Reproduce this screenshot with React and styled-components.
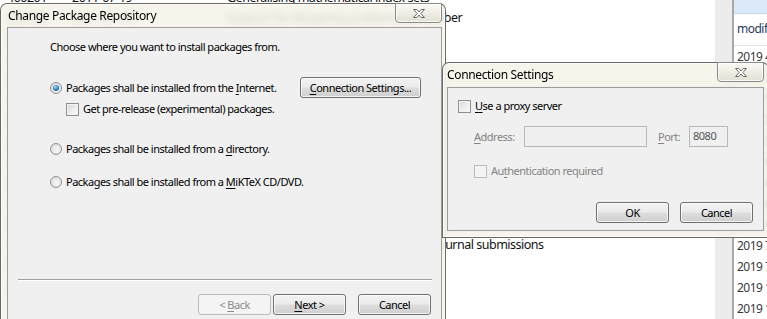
import React from 'react';
import styled, { createGlobalStyle } from 'styled-components';

const GlobalStyle = createGlobalStyle`
  html, body {
    margin: 0;
    padding: 0;
    background: #fff;
  }
  body {
    font-family: 'Noto Sans', 'Segoe UI', sans-serif;
    font-size: 11px;
    letter-spacing: -0.5px;
    color: #000;
  }
  * {
    box-sizing: border-box;
  }
`;

const Desktop = styled.div`
  position: relative;
  width: 767px;
  height: 319px;
  overflow: hidden;
  background: #fff;
`;

/* ---------- application behind the dialogs ---------- */

const AppBehind = styled.div`
  display: flex;
  height: 100%;
`;

const ListPane = styled.div`
  width: 715px;
  flex: none;
  margin-top: -13px;
`;

const ListRow = styled.div`
  display: grid;
  grid-template-columns: 65px 155px 1fr;
  align-items: center;
  height: 20.6px;
  padding-left: 7px;
  white-space: nowrap;
  font-size: 12.5px;
  color: #111;
`;

const Cell = styled.span`
  overflow: hidden;
`;

const Splitter = styled.div`
  width: 19px;
  flex: none;
  background: #ececec;
  border-right: 2px solid #a9a9a9;
`;

const DateColumn = styled.div`
  width: 56px;
  flex: none;
  display: flex;
  flex-direction: column;
`;

const DateTopStrip = styled.div`
  height: 14px;
  background: #dce9f8;
  border-bottom: 1px solid #c3d6ec;
`;

const DateHeader = styled.div`
  height: 33px;
  display: flex;
  flex-direction: column;
  padding-top: 2px;
  border-bottom: 1px solid #e3e3e3;
`;

const SortArrow = styled.svg`
  align-self: flex-end;
  margin-right: 6px;
`;

const HeaderLabel = styled.span`
  padding-left: 3px;
  line-height: 16px;
  margin-top: 1px;
  font-size: 12px;
  color: #1e395b;
  white-space: nowrap;
`;

const DateRow = styled.div`
  height: 21px;
  line-height: 21px;
  padding-left: 3px;
  white-space: nowrap;
  font-size: 12px;
  color: #3a3a3a;
`;

/* ---------- dialog windows ---------- */

const Window = styled.div`
  position: absolute;
  left: ${(p) => p.$x}px;
  top: ${(p) => p.$y}px;
  width: ${(p) => p.$w}px;
  height: ${(p) => p.$h}px;
  display: flex;
  flex-direction: column;
  padding: 0 ${(p) => p.$padR}px ${(p) => p.$padB}px ${(p) => p.$padL}px;
  border: 1px solid rgba(70, 70, 70, 0.8);
  border-radius: 7px 7px 0 0;
  background: rgba(245, 242, 232, 0.86);
  backdrop-filter: blur(3px);
  box-shadow: inset 0 0 0 1px rgba(255, 255, 255, 0.7);
`;

const TitleBar = styled.div`
  height: ${(p) => p.$h}px;
  flex: none;
  display: flex;
  align-items: flex-start;
  justify-content: space-between;
`;

const Title = styled.span`
  line-height: ${(p) => p.$h}px;
  padding-left: ${(p) => p.$indent || 0}px;
  font-size: 12px;
  letter-spacing: -0.35px;
  color: #000;
`;

const CloseButton = styled.div`
  width: 47px;
  height: 20px;
  margin-top: -1px;
  display: flex;
  align-items: center;
  justify-content: center;
  border: 1px solid #8a8a8a;
  border-radius: 0 0 4px 4px;
  background: linear-gradient(180deg, #fbfaf6 0%, #efece3 50%, #e2dfd5 100%);
  box-shadow: inset 0 0 0 1px rgba(255, 255, 255, 0.8);
`;

const Client = styled.div`
  flex: 1;
  display: flex;
  flex-direction: column;
  background: #f0f0f0;
  border: 1px solid #9c9c9c;
`;

const Body = styled.div`
  display: flex;
  flex-direction: column;
  padding: 0 ${(p) => p.$padR || 0}px 0 ${(p) => p.$padL || 0}px;
`;

const Text = styled.div`
  margin-top: ${(p) => p.$mt || 0}px;
  line-height: 16px;
  white-space: nowrap;
`;

const Row = styled.div`
  display: flex;
  align-items: center;
  height: ${(p) => p.$h || 16}px;
  margin-top: ${(p) => p.$mt || 0}px;
  padding-left: ${(p) => p.$indent || 0}px;
  white-space: nowrap;
  color: ${(p) => (p.$disabled ? '#838383' : '#000')};
`;

const Label = styled.span`
  margin-left: 4px;
  line-height: 16px;
`;

const Key = styled.span`
  text-decoration: underline;
  text-underline-offset: 2px;
`;

const Radio = styled.span`
  position: relative;
  width: 12px;
  height: 12px;
  flex: none;
  border-radius: 50%;
  border: 1px solid #8f9194;
  background: radial-gradient(circle at 60% 60%, #f7f7f7 0%, #e6e6e6 55%, #cfd0d1 100%);

  &::after {
    content: '';
    display: ${(p) => (p.$checked ? 'block' : 'none')};
    position: absolute;
    left: 2px;
    top: 2px;
    width: 6px;
    height: 6px;
    border-radius: 50%;
    background: radial-gradient(circle at 40% 35%, #a8dcf7 0%, #3d8ac3 45%, #16466f 100%);
  }
`;

const Check = styled.span`
  width: 13px;
  height: 13px;
  flex: none;
  border: 1px solid ${(p) => (p.$disabled ? '#bcbcbc' : '#8f8f8f')};
  background: ${(p) =>
    p.$disabled
      ? '#f4f4f4'
      : 'linear-gradient(135deg, #d6d6d6 0%, #ececec 50%, #fbfbfb 100%)'};
  box-shadow: inset 0 0 0 1px ${(p) => (p.$disabled ? '#f4f4f4' : '#f3f3f3')};
`;

const Button = styled.button`
  width: ${(p) => p.$w || 73}px;
  height: 21px;
  flex: none;
  margin-left: ${(p) => (p.$auto ? 'auto' : `${p.$ml || 0}px`)};
  padding: 0;
  font-family: inherit;
  font-size: inherit;
  letter-spacing: inherit;
  line-height: 19px;
  color: ${(p) => (p.disabled ? '#8a8a8a' : '#000')};
  border: 1px solid ${(p) => (p.disabled ? '#b7bbbe' : '#707070')};
  border-radius: 3px;
  background: ${(p) =>
    p.disabled
      ? '#f4f4f4'
      : 'linear-gradient(180deg, #f2f2f2 0%, #ebebeb 48%, #dddddd 52%, #cfcfcf 100%)'};
  box-shadow: inset 0 0 0 1px ${(p) => (p.disabled ? '#f4f4f4' : 'rgba(255,255,255,0.75)')};
`;

const Separator = styled.div`
  height: 2px;
  margin: ${(p) => p.$mt}px 9px 0 10px;
  border-top: 1px solid #a0a0a0;
  border-bottom: 1px solid #ffffff;
`;

const Footer = styled.div`
  display: flex;
  justify-content: flex-end;
  margin-top: ${(p) => p.$mt}px;
  padding-right: 10px;
`;

const FieldLabel = styled.span`
  width: ${(p) => p.$w}px;
  margin-left: ${(p) => p.$ml || 0}px;
  flex: none;
  color: #838383;
`;

const Field = styled.div`
  width: ${(p) => p.$w}px;
  height: 21px;
  flex: none;
  padding: 1px 0 0 3px;
  border: 1px solid #b5b9bc;
  background: #f0f0f0;
  color: #555;
  line-height: 16px;
`;

const CloseGlyph = () => (
  <svg width="14" height="11" viewBox="0 0 14 11">
    <polygon
      points="1.5,1.5 4.8,1.5 7,4 9.2,1.5 12.5,1.5 8.8,5.5 12.5,9.5 9.2,9.5 7,7 4.8,9.5 1.5,9.5 5.2,5.5"
      fill="#ffffff"
      stroke="#6a6a6a"
      strokeWidth="1"
      strokeLinejoin="round"
    />
  </svg>
);

const listRows = [
  ['400201', '2011-07-19', 'Generalising mathematical index sets'],
  ['400198', '2011-07-12', 'Support for designing problems by number'],
  ['400187', '2011-06-30', 'Typesetting chemical formulae'],
  ['400176', '2011-06-21', 'Drawing commutative diagrams'],
  ['400169', '2011-06-14', 'Bibliography styles for theses'],
  ['400152', '2011-06-02', 'Page layout for slides'],
  ['400140', '2011-05-25', 'Musical notation'],
  ['400133', '2011-05-18', 'Tables spanning pages'],
  ['400127', '2011-05-09', 'Fonts for Greek text'],
  ['400118', '2011-04-28', 'Index generation'],
  ['400104', '2011-04-19', 'Graphics inclusion'],
  ['400097', '2011-04-11', 'Algorithm listings'],
  ['400089', '2011-04-02', 'Guidelines for preparing all articles for journal submissions'],
  ['400076', '2011-03-24', 'Exam sheets'],
  ['400065', '2011-03-15', 'Letters'],
];

const dates = [
  '2019 4 23',
  '2019 5 02',
  '2019 5 11',
  '2019 5 19',
  '2019 5 27',
  '2019 6 04',
  '2019 6 12',
  '2019 6 21',
  '2019 6 30',
  '2019 7 08',
  '2019 7 16',
  '2019 10 03',
  '2019 11 14',
];

const App = () => {
  return (
    <Desktop>
      <GlobalStyle />

      <AppBehind>
        <ListPane>
          {listRows.map((r) => (
            <ListRow key={r[0]}>
              <Cell>{r[0]}</Cell>
              <Cell>{r[1]}</Cell>
              <Cell>{r[2]}</Cell>
            </ListRow>
          ))}
        </ListPane>
        <Splitter />
        <DateColumn>
          <DateTopStrip />
          <DateHeader>
            <SortArrow width="7" height="4" viewBox="0 0 7 4">
              <polygon points="0,0 7,0 3.5,4" fill="#6aa6d8" />
            </SortArrow>
            <HeaderLabel>modified</HeaderLabel>
          </DateHeader>
          {dates.map((d, i) => (
            <DateRow key={i}>{d}</DateRow>
          ))}
        </DateColumn>
      </AppBehind>

      <Window $x={0} $y={3} $w={446} $h={330} $padL={6} $padR={3} $padB={0}>
        <TitleBar $h={23}>
          <Title $h={23} $indent={1}>Change Package Repository</Title>
          <CloseButton>
            <CloseGlyph />
          </CloseButton>
        </TitleBar>
        <Client>
          <Body $padL={42} $padR={20}>
            <Text $mt={11}>Choose where you want to install packages from.</Text>
            <Row $h={21} $mt={22}>
              <Radio $checked />
              <Label>
                Packages shall be installed from the <Key>I</Key>nternet.
              </Label>
              <Button $w={121} $auto>
                <Key>C</Key>onnection Settings...
              </Button>
            </Row>
            <Row $mt={3} $indent={16}>
              <Check />
              <Label>Get pre-release (experimental) packages.</Label>
            </Row>
            <Row $mt={24}>
              <Radio />
              <Label>
                Packages shall be installed from a <Key>d</Key>irectory.
              </Label>
            </Row>
            <Row $mt={17}>
              <Radio />
              <Label>
                Packages shall be installed from a <Key>M</Key>iKTeX CD/DVD.
              </Label>
            </Row>
          </Body>
          <Separator $mt={89} />
          <Footer $mt={13}>
            <Button disabled>
              &lt; <Key>B</Key>ack
            </Button>
            <Button $ml={2}>
              <Key>N</Key>ext &gt;
            </Button>
            <Button $ml={12}>Cancel</Button>
          </Footer>
        </Client>
      </Window>

      <Window $x={442} $y={62} $w={327} $h={176} $padL={4} $padR={4} $padB={6}>
        <TitleBar $h={24}>
          <Title $h={24}>Connection Settings</Title>
          <CloseButton>
            <CloseGlyph />
          </CloseButton>
        </TitleBar>
        <Client>
          <Body $padL={10} $padR={10}>
            <Row $mt={10}>
              <Check />
              <Label>
                <Key>U</Key>se a proxy server
              </Label>
            </Row>
            <Row $h={21} $mt={12} $indent={16}>
              <FieldLabel $w={50}>
                <Key>A</Key>ddress:
              </FieldLabel>
              <Field $w={123} />
              <FieldLabel $w={31} $ml={11}>
                <Key>P</Key>ort:
              </FieldLabel>
              <Field $w={39}>8080</Field>
            </Row>
            <Row $mt={16} $indent={16} $disabled>
              <Check $disabled />
              <Label>
                Au<Key>t</Key>hentication required
              </Label>
            </Row>
            <Row $h={21} $mt={23}>
              <Button $auto>OK</Button>
              <Button $ml={11}>Cancel</Button>
            </Row>
          </Body>
        </Client>
      </Window>
    </Desktop>
  );
};

export default App;
